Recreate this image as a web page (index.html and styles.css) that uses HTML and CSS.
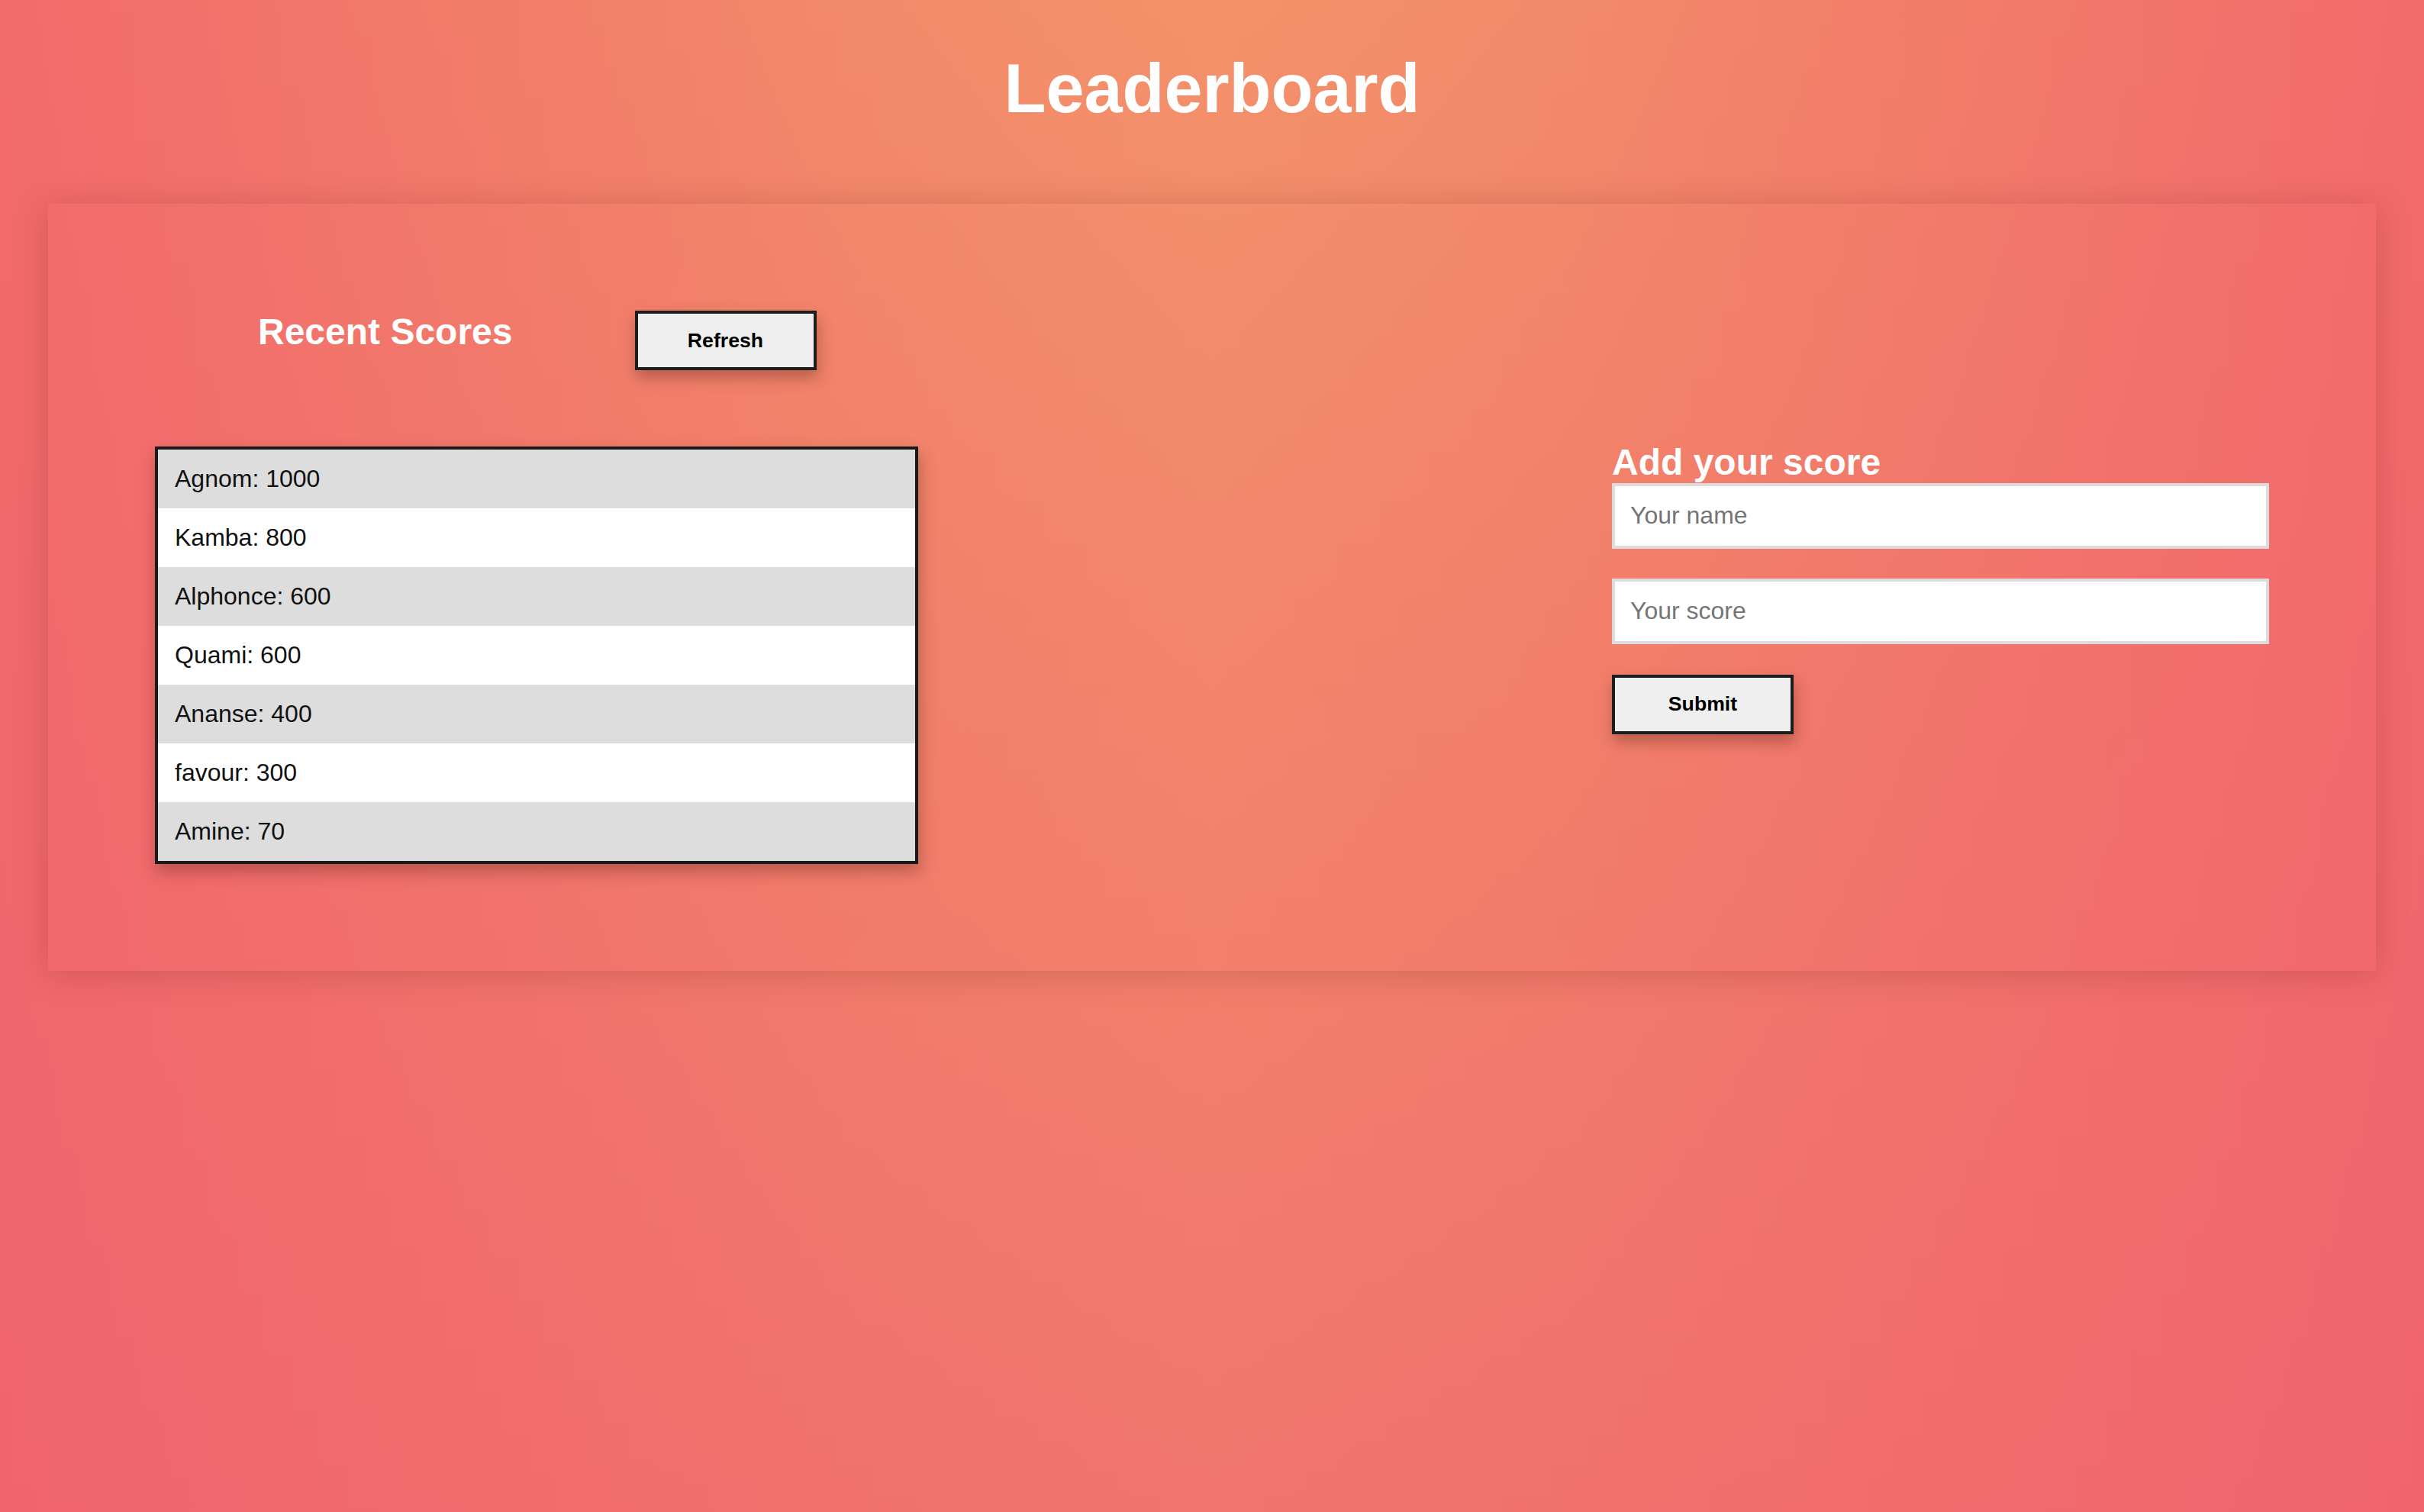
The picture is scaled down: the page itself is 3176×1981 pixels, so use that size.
FILE: index.html
```html
<!DOCTYPE html>
<html lang="en">
<head>
<meta charset="utf-8">
<title>Leaderboard</title>
<link rel="stylesheet" href="styles.css">
</head>
<body>
<header class="page-header">
  <h1 class="title">Leaderboard</h1>
</header>
<main class="board">
  <section class="scores">
    <div class="scores-head">
      <h2 class="section-title">Recent Scores</h2>
      <button class="btn" type="button">Refresh</button>
    </div>
    <ul class="score-list">
      <li class="score-item">Agnom: 1000</li>
      <li class="score-item">Kamba: 800</li>
      <li class="score-item">Alphonce: 600</li>
      <li class="score-item">Quami: 600</li>
      <li class="score-item">Ananse: 400</li>
      <li class="score-item">favour: 300</li>
      <li class="score-item">Amine: 70</li>
    </ul>
  </section>
  <section class="add-score">
    <h2 class="section-title">Add your score</h2>
    <form class="score-form">
      <input class="field" type="text" placeholder="Your name">
      <input class="field field-last" type="text" placeholder="Your score">
      <button class="btn" type="button">Submit</button>
    </form>
  </section>
</main>
</body>
</html>
```
FILE: styles.css
```css
html {
  min-height: 100%;
}

body {
  margin: 0;
  min-height: 100vh;
  font-family: "Liberation Sans", Arial, sans-serif;
  background:
    linear-gradient(to bottom, rgba(240, 94, 112, 0) 0%, rgba(240, 94, 112, 0.55) 100%),
    linear-gradient(to right, #f26b6b 0%, #f28a69 35%, #f3926a 50%, #f28a69 65%, #f26b6b 100%);
  background-attachment: fixed;
}

.page-header {
  padding-top: 65px;
  padding-bottom: 99px;
  text-align: center;
}

.title {
  margin: 0;
  font-size: 90px;
  font-weight: bold;
  line-height: normal;
  color: #ffffff;
}

.board {
  margin: 0 63px;
  padding: 140px;
  display: flex;
  justify-content: space-between;
  align-items: center;
  box-shadow: 0 4px 40px rgba(90, 30, 20, 0.22);
}

.scores {
  width: 1000px;
  display: flex;
  flex-direction: column;
}

.scores-head {
  display: flex;
  align-items: flex-start;
  padding-left: 135px;
  gap: 160px;
  margin-bottom: 100px;
}

.section-title {
  margin: 0;
  font-size: 48px;
  font-weight: bold;
  line-height: normal;
  color: #ffffff;
}

.btn {
  width: 238px;
  height: 78px;
  padding: 0;
  border: 4px solid #1c1e1d;
  border-radius: 0;
  background: #efefef;
  color: #000000;
  font-family: "Liberation Sans", Arial, sans-serif;
  font-size: 26.67px;
  font-weight: bold;
  box-shadow: 2px 10px 18px rgba(80, 30, 20, 0.35);
  cursor: pointer;
}

.score-list {
  list-style: none;
  margin: 0;
  padding: 0;
  border: 4px solid #1a1a1a;
  box-shadow: 2px 10px 20px rgba(80, 30, 20, 0.35);
}

.score-item {
  padding: 20px 22px;
  font-size: 32px;
  line-height: 37px;
  color: #111111;
  background: #dddddd;
}

.score-item:nth-child(even) {
  background: #ffffff;
}

.add-score {
  width: 861px;
  display: flex;
  flex-direction: column;
}

.score-form {
  display: flex;
  flex-direction: column;
  align-items: flex-start;
}

.field {
  display: block;
  width: 100%;
  height: 86px;
  box-sizing: border-box;
  margin: 0 0 39px;
  padding: 0 20px;
  border: 4px solid #dcdcdc;
  border-radius: 0;
  background: #ffffff;
  font-family: "Liberation Sans", Arial, sans-serif;
  font-size: 32px;
  color: #222222;
  outline: none;
}

.field-last {
  margin-bottom: 40px;
}

.field::placeholder {
  color: #757575;
}
```
